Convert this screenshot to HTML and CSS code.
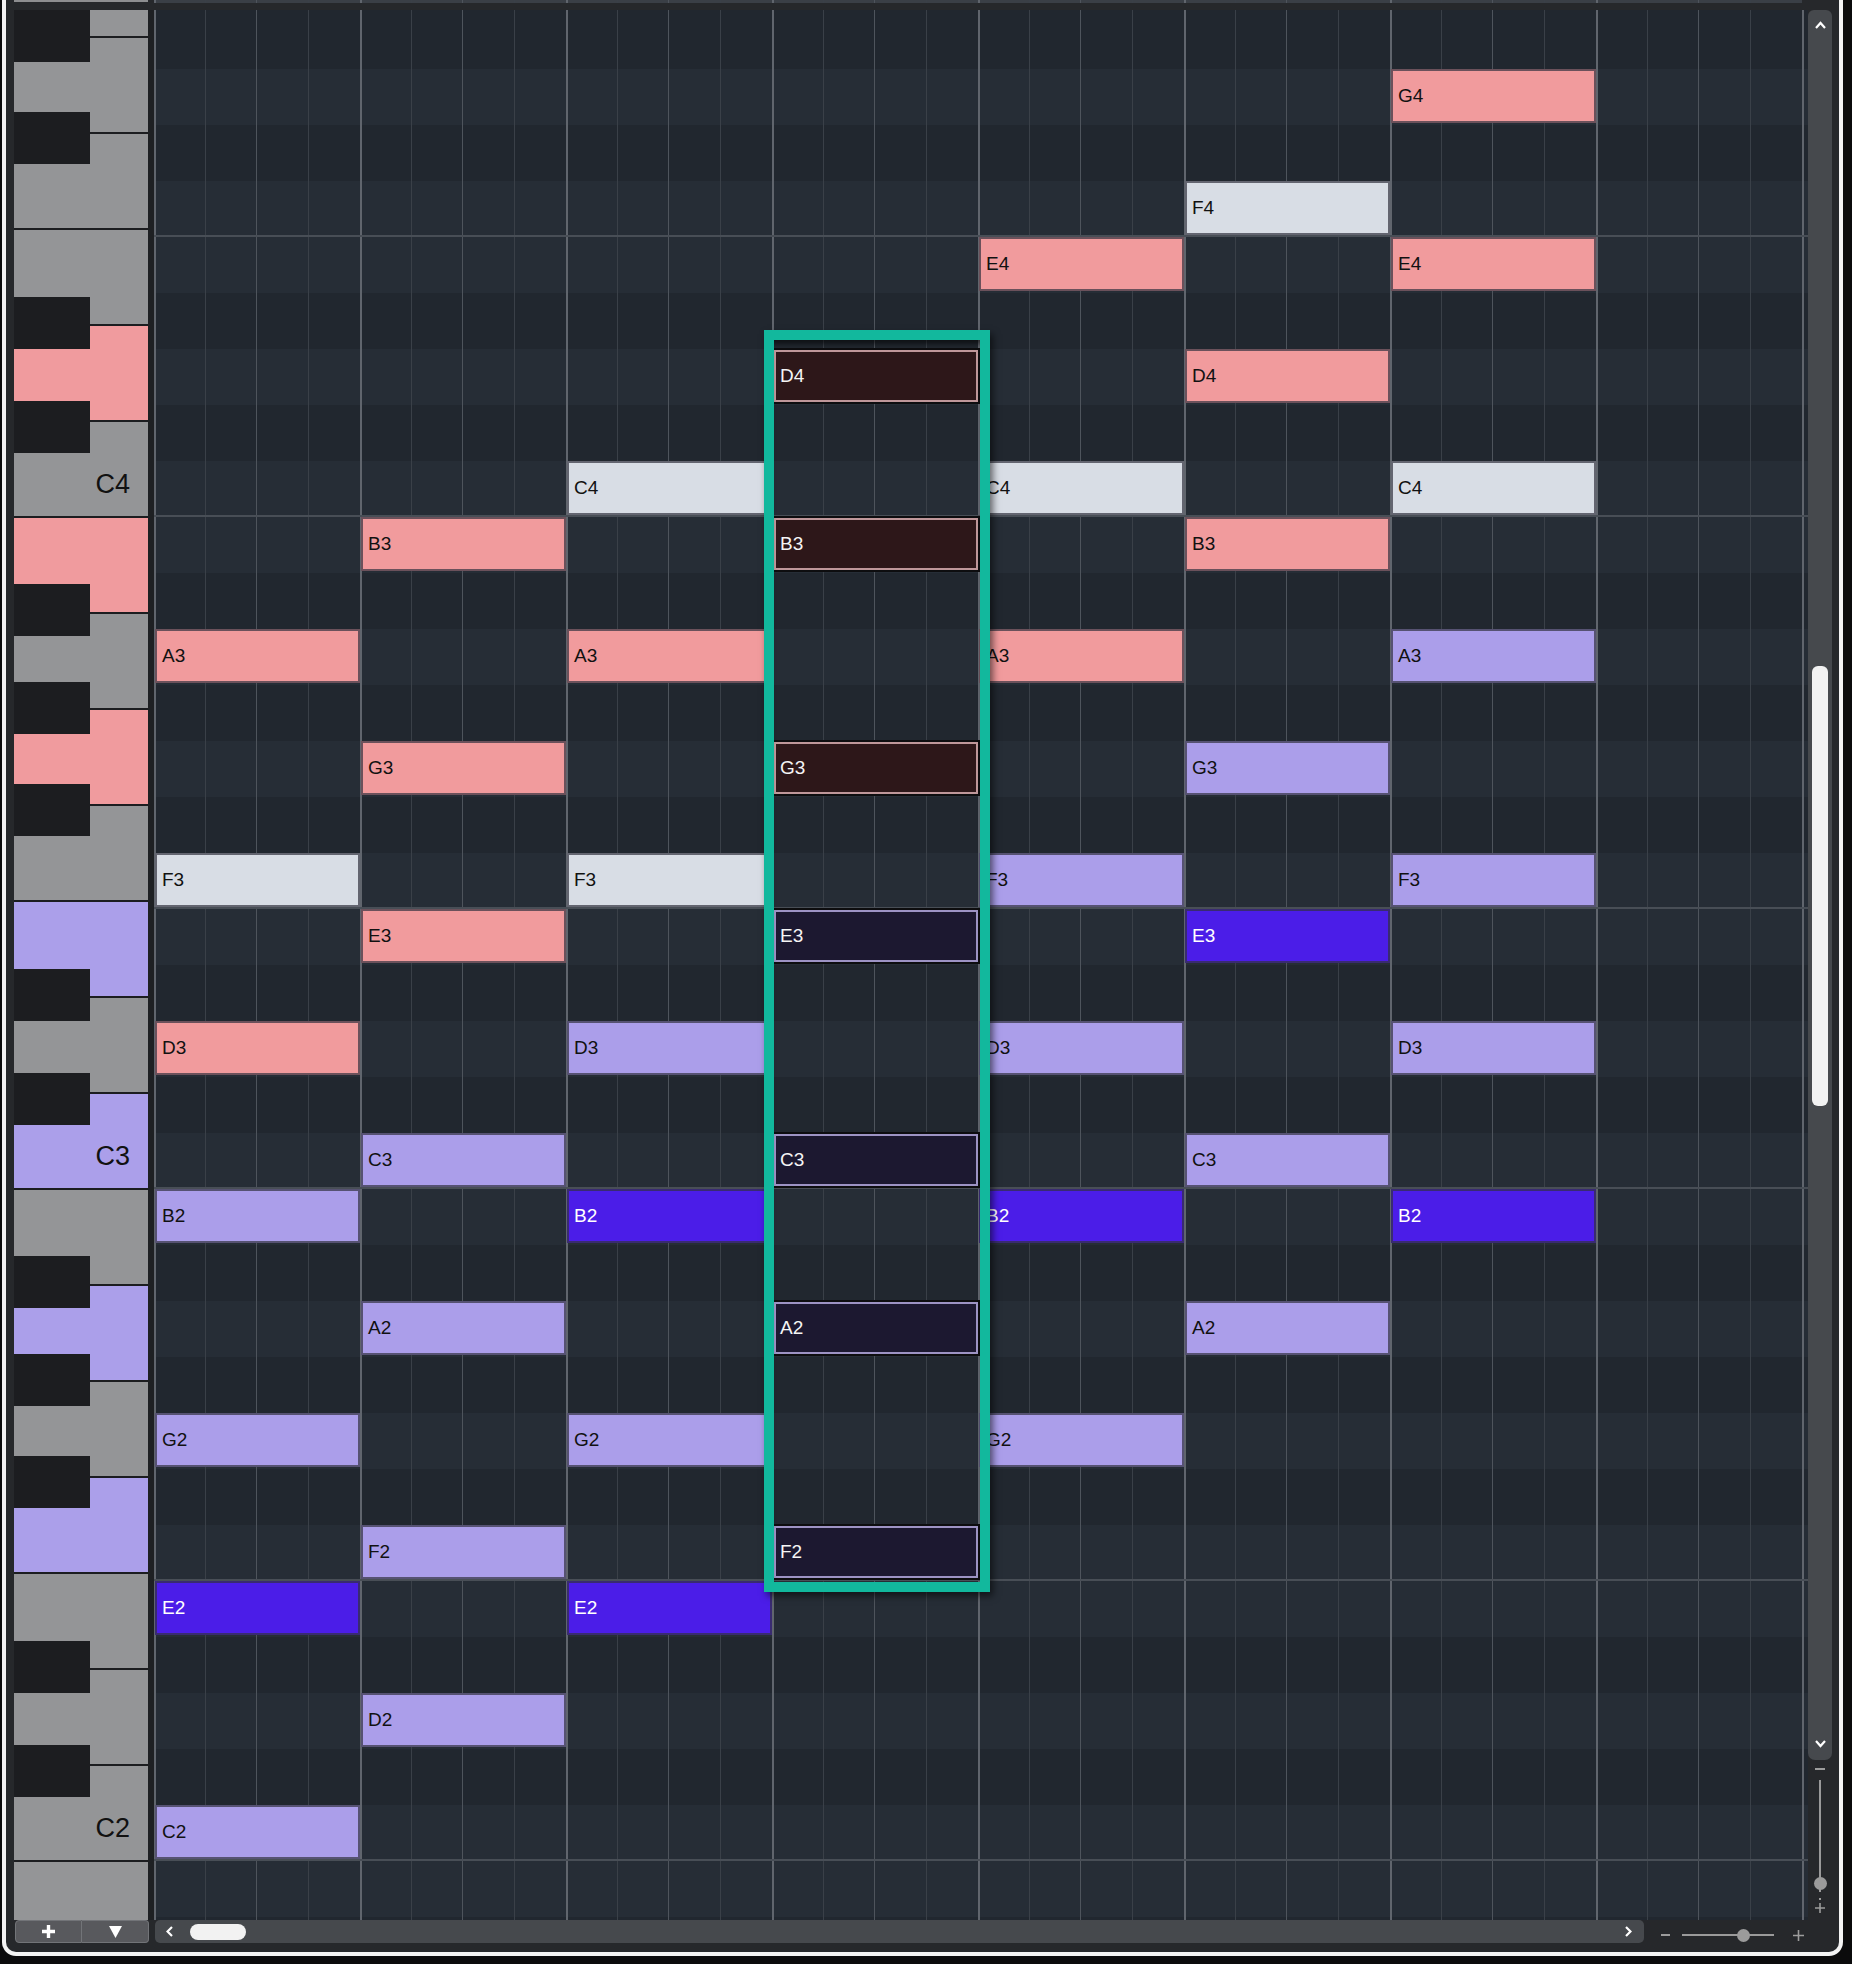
FILE: index.html
```html
<!DOCTYPE html>
<html>
  <head>
    <meta charset="UTF-8">
    <meta name="viewport" content="width=device-width, initial-scale=1.0">
    <title>Key Editor</title>
    <link rel="stylesheet" href="styles.css">
  </head>
  <body>
    <div class="window">
      <div class="topline">
        <div class="topline-keys"></div>
        <div class="topline-grid"></div>
      </div>
      <div class="editor">
        <div class="keyboard" id="keyboard"></div>
        <div class="divider"></div>
        <div class="roll">
          <div class="rows" id="rows"></div>
          <div class="notes" id="notes"></div>
          <div class="selection"></div>
        </div>
        <div class="vscroll">
          <div class="vtrack">
            <svg class="chev-v" width="11" height="8" viewBox="0 0 11 8"><polyline points="1,7 5.5,2 10,7" fill="none" stroke="#fff" stroke-width="2.2"/></svg>
            <div class="vthumb"></div>
            <svg class="chev-v chev-down" width="11" height="8" viewBox="0 0 11 8"><polyline points="1,1 5.5,6 10,1" fill="none" stroke="#fff" stroke-width="2.2"/></svg>
          </div>
          <div class="vzoom">
            <div class="vminus"></div>
            <div class="vline"><div class="vknob"></div></div>
            <div class="vdot"></div>
            <svg class="vplus" width="10" height="10" viewBox="0 0 10 10"><path d="M5 0v10M0 5h10" stroke="#9c9c9c" stroke-width="1.6"/></svg>
          </div>
        </div>
      </div>
      <div class="bottombar">
        <div class="btns">
          <div class="btn"><svg width="15" height="15" viewBox="0 0 15 15"><path d="M7.5 1v13M1 7.5h13" stroke="#fff" stroke-width="3.4"/></svg></div>
          <div class="btn"><svg width="13" height="12" viewBox="0 0 13 12"><polygon points="0,0 13,0 6.5,12" fill="#fff"/></svg></div>
        </div>
        <div class="htrack">
          <svg width="7" height="11" viewBox="0 0 7 11"><polyline points="6,1 1.5,5.5 6,10" fill="none" stroke="#fff" stroke-width="2.2"/></svg>
          <div class="hthumb"></div>
          <svg class="chev-right" width="7" height="11" viewBox="0 0 7 11"><polyline points="1,1 5.5,5.5 1,10" fill="none" stroke="#fff" stroke-width="2.2"/></svg>
        </div>
        <div class="hzoom">
          <div class="hminus"></div>
          <div class="hline"><div class="hknob"></div></div>
          <svg class="hplus" width="11" height="11" viewBox="0 0 11 11"><path d="M5.5 0v11M0 5.5h11" stroke="#9c9c9c" stroke-width="1.6"/></svg>
        </div>
      </div>
    </div>
    <script>
      var letters = {C:0, D:2, E:4, F:5, G:7, A:9, B:11};
      var blackSteps = [1, 3, 6, 8, 10];
      function midi(name) {
        return letters[name[0]] + (parseInt(name.slice(1)) + 1) * 12;
      }

      // grid rows, G#4 at the top
      var rows = document.getElementById("rows");
      for (var m = 68; m >= 34; m--) {
        var r = document.createElement("div");
        r.className = "row";
        if (blackSteps.indexOf(m % 12) >= 0) r.className += " dark";
        if (m % 12 == 0 || m % 12 == 5) r.className += " edge";
        rows.appendChild(r);
      }

      // keyboard
      var keyboard = document.getElementById("keyboard");
      var whites = ["A4","G4","F4","E4","D4","C4","B3","A3","G3","F3","E3","D3","C3","B2","A2","G2","F2","E2","D2","C2","B1"];
      var pinkKeys = ["D4","B3","G3"];
      var violetKeys = ["E3","C3","A2","F2"];
      for (var i = 0; i < whites.length; i++) {
        var k = document.createElement("div");
        k.className = "wkey";
        if (pinkKeys.indexOf(whites[i]) >= 0) k.className += " pink";
        if (violetKeys.indexOf(whites[i]) >= 0) k.className += " violet";
        if (whites[i][0] == "C") k.textContent = whites[i];
        keyboard.appendChild(k);
      }
      // black key tops measured up from each octave's B|C line
      var blackOffsets = [115, 219, 404, 506, 604];
      for (var oct = 4; oct >= 1; oct--) {
        var octBottom = 506 + 672 * (4 - oct);
        for (var j = 0; j < blackOffsets.length; j++) {
          var keyTop = octBottom - blackOffsets[j];
          if (keyTop < -52 || keyTop > 1910) continue;
          var b = document.createElement("div");
          b.className = "bkey";
          b.style.top = keyTop + "px";
          keyboard.appendChild(b);
        }
      }

      // notes: one chord per bar
      var bars = [
        [["A3","p"],["F3","w"],["D3","p"],["B2","l"],["G2","l"],["E2","b"],["C2","l"]],
        [["B3","p"],["G3","p"],["E3","p"],["C3","l"],["A2","l"],["F2","l"],["D2","l"]],
        [["C4","w"],["A3","p"],["F3","w"],["D3","l"],["B2","b"],["G2","l"],["E2","b"]],
        [["D4","r"],["B3","r"],["G3","r"],["E3","v"],["C3","v"],["A2","v"],["F2","v"]],
        [["E4","p"],["C4","w"],["A3","p"],["F3","l"],["D3","l"],["B2","b"],["G2","l"]],
        [["F4","w"],["D4","p"],["B3","p"],["G3","l"],["E3","b"],["C3","l"],["A2","l"]],
        [["G4","p"],["E4","p"],["C4","w"],["A3","l"],["F3","l"],["D3","l"],["B2","b"]]
      ];
      var notes = document.getElementById("notes");
      for (var bar = 0; bar < bars.length; bar++) {
        for (var n = 0; n < bars[bar].length; n++) {
          var d = bars[bar][n];
          var el = document.createElement("div");
          el.className = "note c-" + d[1];
          el.textContent = d[0];
          el.style.gridArea = (68 - midi(d[0]) + 1) + " / " + (bar + 1);
          notes.appendChild(el);
        }
      }
    </script>
  </body>
</html>
```

FILE: styles.css
```css
* {
    margin: 0;
    padding: 0;
    box-sizing: border-box;
}
:root {
    --lines: repeating-linear-gradient(90deg,
        #60656d 0 2px, transparent 2px 51px,
        #3a4048 51px 52px, transparent 52px 102px,
        #4e545c 102px 103px, transparent 103px 154px,
        #3a4048 154px 155px, transparent 155px 206px);
    --teal: #12b89d;
}
body {
    width: 1852px;
    height: 1964px;
    overflow: hidden;
    background: #0b0b0c;
    font-family: "Liberation Sans", Arial, Helvetica, sans-serif;
}
.window {
    margin-left: 2px;
    width: 1841px;
    height: 1956px;
    border: 4px solid #f3f3f3;
    border-top: 0;
    border-radius: 0 0 14px 14px;
    background: #26282b;
    overflow: hidden;
}
.topline {
    display: flex;
    height: 10px;
    padding-left: 8px;
}
.topline-keys {
    width: 134px;
    height: 2px;
    background: #8d8e90;
}
.topline-grid {
    margin-left: 6px;
    width: 1648px;
    height: 3px;
    background: var(--lines), #3a3f46;
}

/* editor */
.editor {
    display: flex;
    height: 1910px;
    padding-left: 8px;
}
.keyboard {
    position: relative;
    width: 134px;
    overflow: hidden;
    display: flex;
    flex-direction: column;
    background: #949597;
}
.wkey {
    flex: none;
    height: 96px;
    border-top: 2px solid #1c1d20;
    background: #949597;
    display: flex;
    justify-content: flex-end;
    align-items: flex-end;
    padding: 0 18px 18px 0;
    font-size: 27px;
    line-height: 27px;
    color: #111;
}
.wkey:first-child {
    margin-top: -70px;
}
.wkey.pink {
    background: #f09b9e;
}
.wkey.violet {
    background: #ab9fea;
}
.bkey {
    position: absolute;
    left: 0;
    width: 76px;
    height: 52px;
    background: #1c1d20;
}
.divider {
    width: 6px;
    background: #1e2023;
}

/* note grid */
.roll {
    position: relative;
    width: 1654px;
    overflow: hidden;
    background: var(--lines), #21272f;
}
.rows {
    margin-top: 3px;
    display: flex;
    flex-direction: column;
}
.row {
    flex: none;
    height: 56px;
    background: var(--lines), #262d36;
}
.row.dark {
    background: var(--lines), #21272f;
}
.row.edge {
    border-bottom: 2px solid #484e56;
}
.notes {
    position: absolute;
    top: 3px;
    left: 0;
    display: grid;
    grid-template-columns: repeat(8, 206px);
    grid-template-rows: repeat(35, 56px);
}
.note {
    align-self: start;
    justify-self: start;
    margin-left: 1px;
    width: 205px;
    height: 54px;
    border: 2px solid rgba(50, 50, 62, 0.7);
    display: flex;
    align-items: center;
    padding-left: 5px;
    font-size: 19px;
    color: #111;
}
.c-p { background: #f19b9d; }
.c-w { background: #d8dde5; }
.c-l { background: #ab9eea; }
.c-b { background: #4b1de8; color: #fff; }
.c-r, .c-v {
    margin: 1px 0 0 2px;
    width: 204px;
    height: 52px;
    padding-left: 4px;
    color: #f5f5f5;
    box-shadow: 0 0 0 2px #0d0d0f;
}
.c-r {
    background: #2d1719;
    border-color: #bf979a;
}
.c-v {
    background: #1c1830;
    border-color: #9d93c4;
}
.selection {
    position: absolute;
    left: 610px;
    top: 320px;
    width: 226px;
    height: 1262px;
    border: 10px solid var(--teal);
    box-shadow: 3px 4px 7px rgba(0, 0, 0, 0.55), inset 0 7px 5px -3px rgba(0, 0, 0, 0.55);
}

/* vertical scroll + zoom */
.vscroll {
    width: 24px;
    display: flex;
    flex-direction: column;
}
.vtrack {
    height: 1750px;
    background: #46494d;
    border-radius: 6px 6px 7px 7px;
    display: flex;
    flex-direction: column;
    align-items: center;
    padding: 11px 0 12px;
}
.vthumb {
    margin-top: 637px;
    width: 16px;
    height: 440px;
    background: #f2f2f2;
    border-radius: 6px;
}
.chev-down {
    margin-top: auto;
}
.vzoom {
    display: flex;
    flex-direction: column;
    align-items: center;
    padding-top: 8px;
}
.vminus {
    width: 10px;
    height: 2px;
    background: #9c9c9c;
}
.vline {
    position: relative;
    margin-top: 10px;
    width: 2px;
    height: 112px;
    background: #9a9a9a;
}
.vknob {
    position: absolute;
    top: 97px;
    left: -5.5px;
    width: 13px;
    height: 13px;
    border-radius: 50%;
    background: #9b9b9b;
}
.vdot {
    margin-top: 6px;
    width: 2px;
    height: 2px;
    background: #9c9c9c;
}
.vplus {
    margin-top: 3px;
}

/* bottom bar */
.bottombar {
    display: flex;
    height: 32px;
    padding-left: 9px;
}
.btns {
    display: flex;
    width: 134px;
    height: 23px;
}
.btn {
    display: flex;
    align-items: center;
    justify-content: center;
    width: 67px;
    height: 23px;
    background: #58595d;
    border: 1px solid #727478;
    border-radius: 4px 0 0 4px;
}
.btn + .btn {
    border-left: 0;
    border-radius: 0 4px 4px 0;
}
.htrack {
    margin-left: 6px;
    width: 1489px;
    height: 23px;
    background: #46494d;
    border-radius: 5px;
    display: flex;
    align-items: center;
    padding: 0 12px 0 11px;
}
.hthumb {
    margin-left: 17px;
    width: 56px;
    height: 16px;
    background: #f2f2f2;
    border-radius: 8px;
}
.chev-right {
    margin-left: auto;
}
.hzoom {
    display: flex;
    align-items: center;
    height: 30px;
    padding-left: 17px;
}
.hminus {
    width: 9px;
    height: 2px;
    background: #9c9c9c;
}
.hline {
    position: relative;
    margin-left: 12px;
    width: 92px;
    height: 2px;
    background: #9a9a9a;
}
.hknob {
    position: absolute;
    left: 55px;
    top: -5.5px;
    width: 13px;
    height: 13px;
    border-radius: 50%;
    background: #9b9b9b;
}
.hplus {
    margin-left: 19px;
}
```
